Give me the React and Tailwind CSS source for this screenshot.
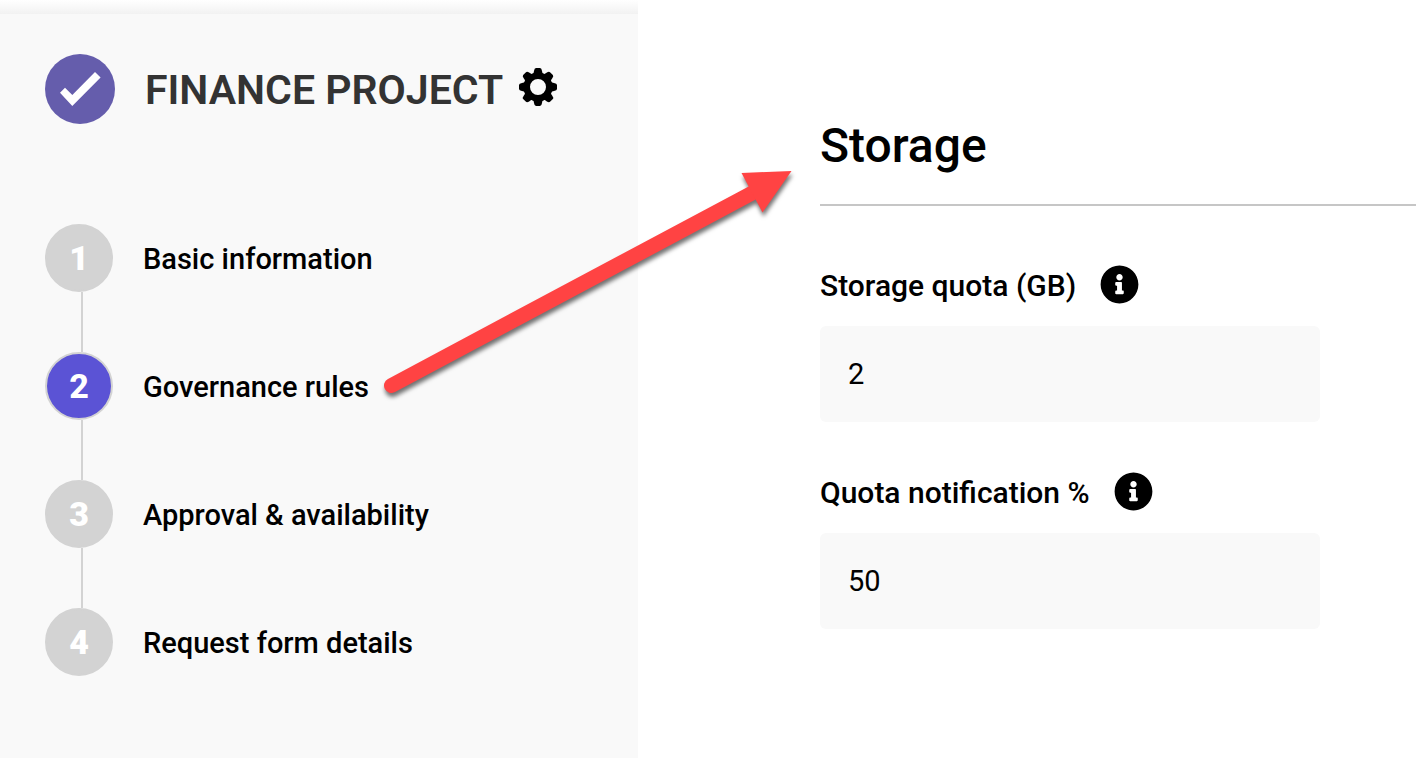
import { FaInfoCircle } from "react-icons/fa";

const steps = [
  { id: 1, label: "Basic information" },
  { id: 2, label: "Governance rules" },
  { id: 3, label: "Approval & availability" },
  { id: 4, label: "Request form details" },
];

const teeth = [0, 45, 90, 135, 180, 225, 270, 315];

function GearIcon() {
  return (
    <svg viewBox="-19 -19 38 38" className="h-[38px] w-[38px]" aria-hidden="true">
      <circle r="11.3" fill="none" stroke="#000" strokeWidth="6.6" />
      {teeth.map((angle) => (
        <path
          key={angle}
          d="M-5.2 -12.6 Q-4.2 -14 -4 -16 Q-3.6 -19 -2 -19 L2 -19 Q3.6 -19 4 -16 Q4.2 -14 5.2 -12.6 Z"
          transform={`rotate(${angle})`}
        />
      ))}
    </svg>
  );
}

function Step({ id, label, active, last }) {
  return (
    <li>
      <a href={`#step-${id}`} aria-current={active ? "step" : undefined} className="flex items-center gap-[30px]">
        <span
          className={
            active
              ? "flex h-[68px] w-[68px] shrink-0 items-center justify-center rounded-full border-2 border-[#d3d3d3] bg-[#5b53d5] text-[34px] leading-[40px] font-extrabold text-white"
              : "flex h-[68px] w-[68px] shrink-0 items-center justify-center rounded-full border-2 border-[#d3d3d3] bg-[#d3d3d3] text-[34px] leading-[40px] font-black text-white"
          }
        >
          {id}
        </span>
        <span className="pt-[2px] text-[29px] leading-[40px] font-medium">{label}</span>
      </a>
      {!last && <div className="ml-9 h-[60px] w-[2px] bg-[#d3d3d3]" />}
    </li>
  );
}

function Field({ id, label, value }) {
  return (
    <div>
      <div className="flex items-center gap-6">
        <label htmlFor={id} className="text-[30px] leading-[40px] font-medium">
          {label}
        </label>
        <button type="button" aria-label={`About ${label}`} className="pb-[2px]">
          <FaInfoCircle className="h-[39px] w-[39px]" />
        </button>
      </div>
      <input
        id={id}
        type="text"
        defaultValue={value}
        className="mt-5 block h-24 w-full max-w-[500px] rounded-md bg-[#f9f9f9] px-7 text-[29px] outline-none"
      />
    </div>
  );
}

export default function App() {
  return (
    <div className="relative flex min-h-screen bg-white font-['Roboto',sans-serif] text-black">
      <aside className="w-[638px] shrink-0 bg-[#f9f9f9]">
        <div className="h-[14px] bg-linear-to-b from-white to-[#f2f2f2]" />
        <div className="px-[45px] pt-10">
          <div className="flex items-center">
            <svg viewBox="0 0 70 70" className="h-[70px] w-[70px]" aria-hidden="true">
              <circle cx="35" cy="35" r="35" fill="#655dac" />
              <path d="M15 38.7 L20 33.7 L27.3 41 L50 18 L55.6 23.6 L27.3 52 Z" fill="#fff" />
            </svg>
            <h1 className="ml-[30px] pt-[2px] text-[41px] leading-[48px] font-semibold text-[#333]">FINANCE PROJECT</h1>
            <button type="button" aria-label="Project settings" className="ml-4 pb-1">
              <GearIcon />
            </button>
          </div>
          <nav className="mt-[100px]" aria-label="Project steps">
            <ol>
              {steps.map((step) => (
                <Step key={step.id} {...step} active={step.id === 2} last={step.id === 4} />
              ))}
            </ol>
          </nav>
        </div>
      </aside>

      <main className="min-w-0 grow pt-[116px] pl-[182px]">
        <h2 className="border-b-2 border-[#c6c6c6] pb-7 text-[48px] leading-[60px] font-medium">Storage</h2>
        <form className="mt-[59px] flex flex-col gap-[50px]">
          <Field id="storage-quota" label="Storage quota (GB)" value="2" />
          <Field id="quota-notification" label="Quota notification %" value="50" />
        </form>
      </main>

      <svg
        viewBox="370 150 440 260"
        className="pointer-events-none absolute top-[150px] left-[370px] h-[260px] w-[440px] drop-shadow-[1px_4px_2px_rgba(0,0,0,0.55)]"
        aria-hidden="true"
      >
        <path d="M391.5 385.5 L755 191.5" stroke="#ff4343" strokeWidth="15" strokeLinecap="round" />
        <path d="M791.5 171 L741.5 173 L762.5 212.5 Z" fill="#ff4343" />
      </svg>
    </div>
  );
}
